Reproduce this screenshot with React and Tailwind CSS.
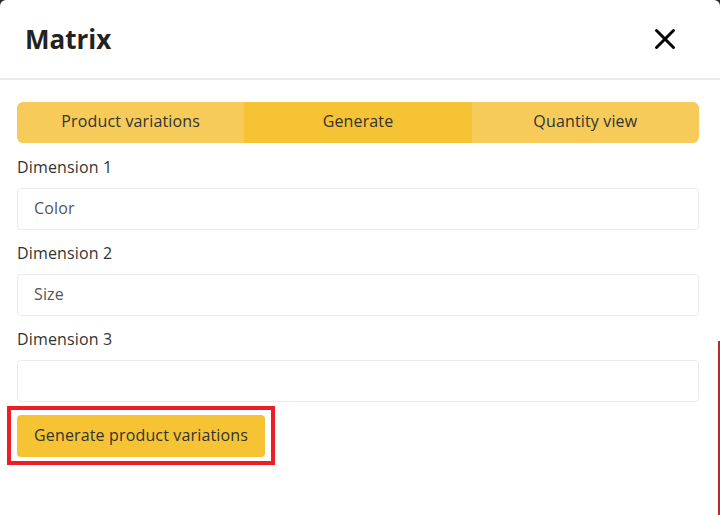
import { X } from 'lucide-react';

const Field = ({ label, placeholder }) => (
    <div className="flex flex-col">
        <label className="mt-[11px] mb-[9px] text-[16px] leading-[24px] tracking-[0.15px] text-[#333]">{label}</label>
        <input
            type="text"
            placeholder={placeholder}
            className="h-[42px] w-full rounded-[4px] border border-[#ebebeb] bg-white px-4 pb-[3px] text-[16px] tracking-[0.15px] text-[#333] placeholder:text-[#555] focus:outline-none"
        />
    </div>
);

const App = () => {
    const tabs = ['Product variations', 'Generate', 'Quantity view'];
    const active = 1;

    return (
        <div className="relative min-h-[515px] w-[720px] bg-[#2a2a2a] font-['Open_Sans',sans-serif]">
            <div className="min-h-[515px] rounded-t-[6px] bg-white">
                <div className="flex h-[80px] items-center justify-between border-b-2 border-[#ececec] pl-[25px] pr-[38px]">
                    <h1 className="text-[26px] font-bold text-[#222]">Matrix</h1>
                    <X size={34} strokeWidth={2.1} className="text-black" />
                </div>

                <div className="pl-[17px] pr-[21px] pt-[22px]">
                    <div className="mb-[1px] grid h-[41px] grid-cols-3 overflow-hidden rounded-[6px]">
                        {tabs.map((tab, i) => (
                            <button
                                key={tab}
                                className={
                                    i === active
                                        ? 'bg-[#f5c334] pb-[3px] text-[16px] tracking-[0.15px] text-[#333]'
                                        : 'bg-[#f6cb5a] pb-[3px] text-[16px] tracking-[0.15px] text-[#333]'
                                }
                            >
                                {tab}
                            </button>
                        ))}
                    </div>

                    <Field label="Dimension 1" placeholder="Color" />
                    <Field label="Dimension 2" placeholder="Size" />
                    <Field label="Dimension 3" placeholder="" />

                    <div className="-ml-[10px] mt-[4px] inline-block border-4 border-[#ee1c25] px-[6px] pt-[5px] pb-[4px]">
                        <button className="h-[42px] rounded-[4px] bg-[#f5c334] px-[17px] pb-[3px] text-[16px] tracking-[0.15px] text-[#333]">
                            Generate product variations
                        </button>
                    </div>
                </div>
            </div>
            <div className="absolute right-0 top-[341px] h-[174px] w-[2px] bg-[#c0272d]" />
        </div>
    );
};

export default App;
